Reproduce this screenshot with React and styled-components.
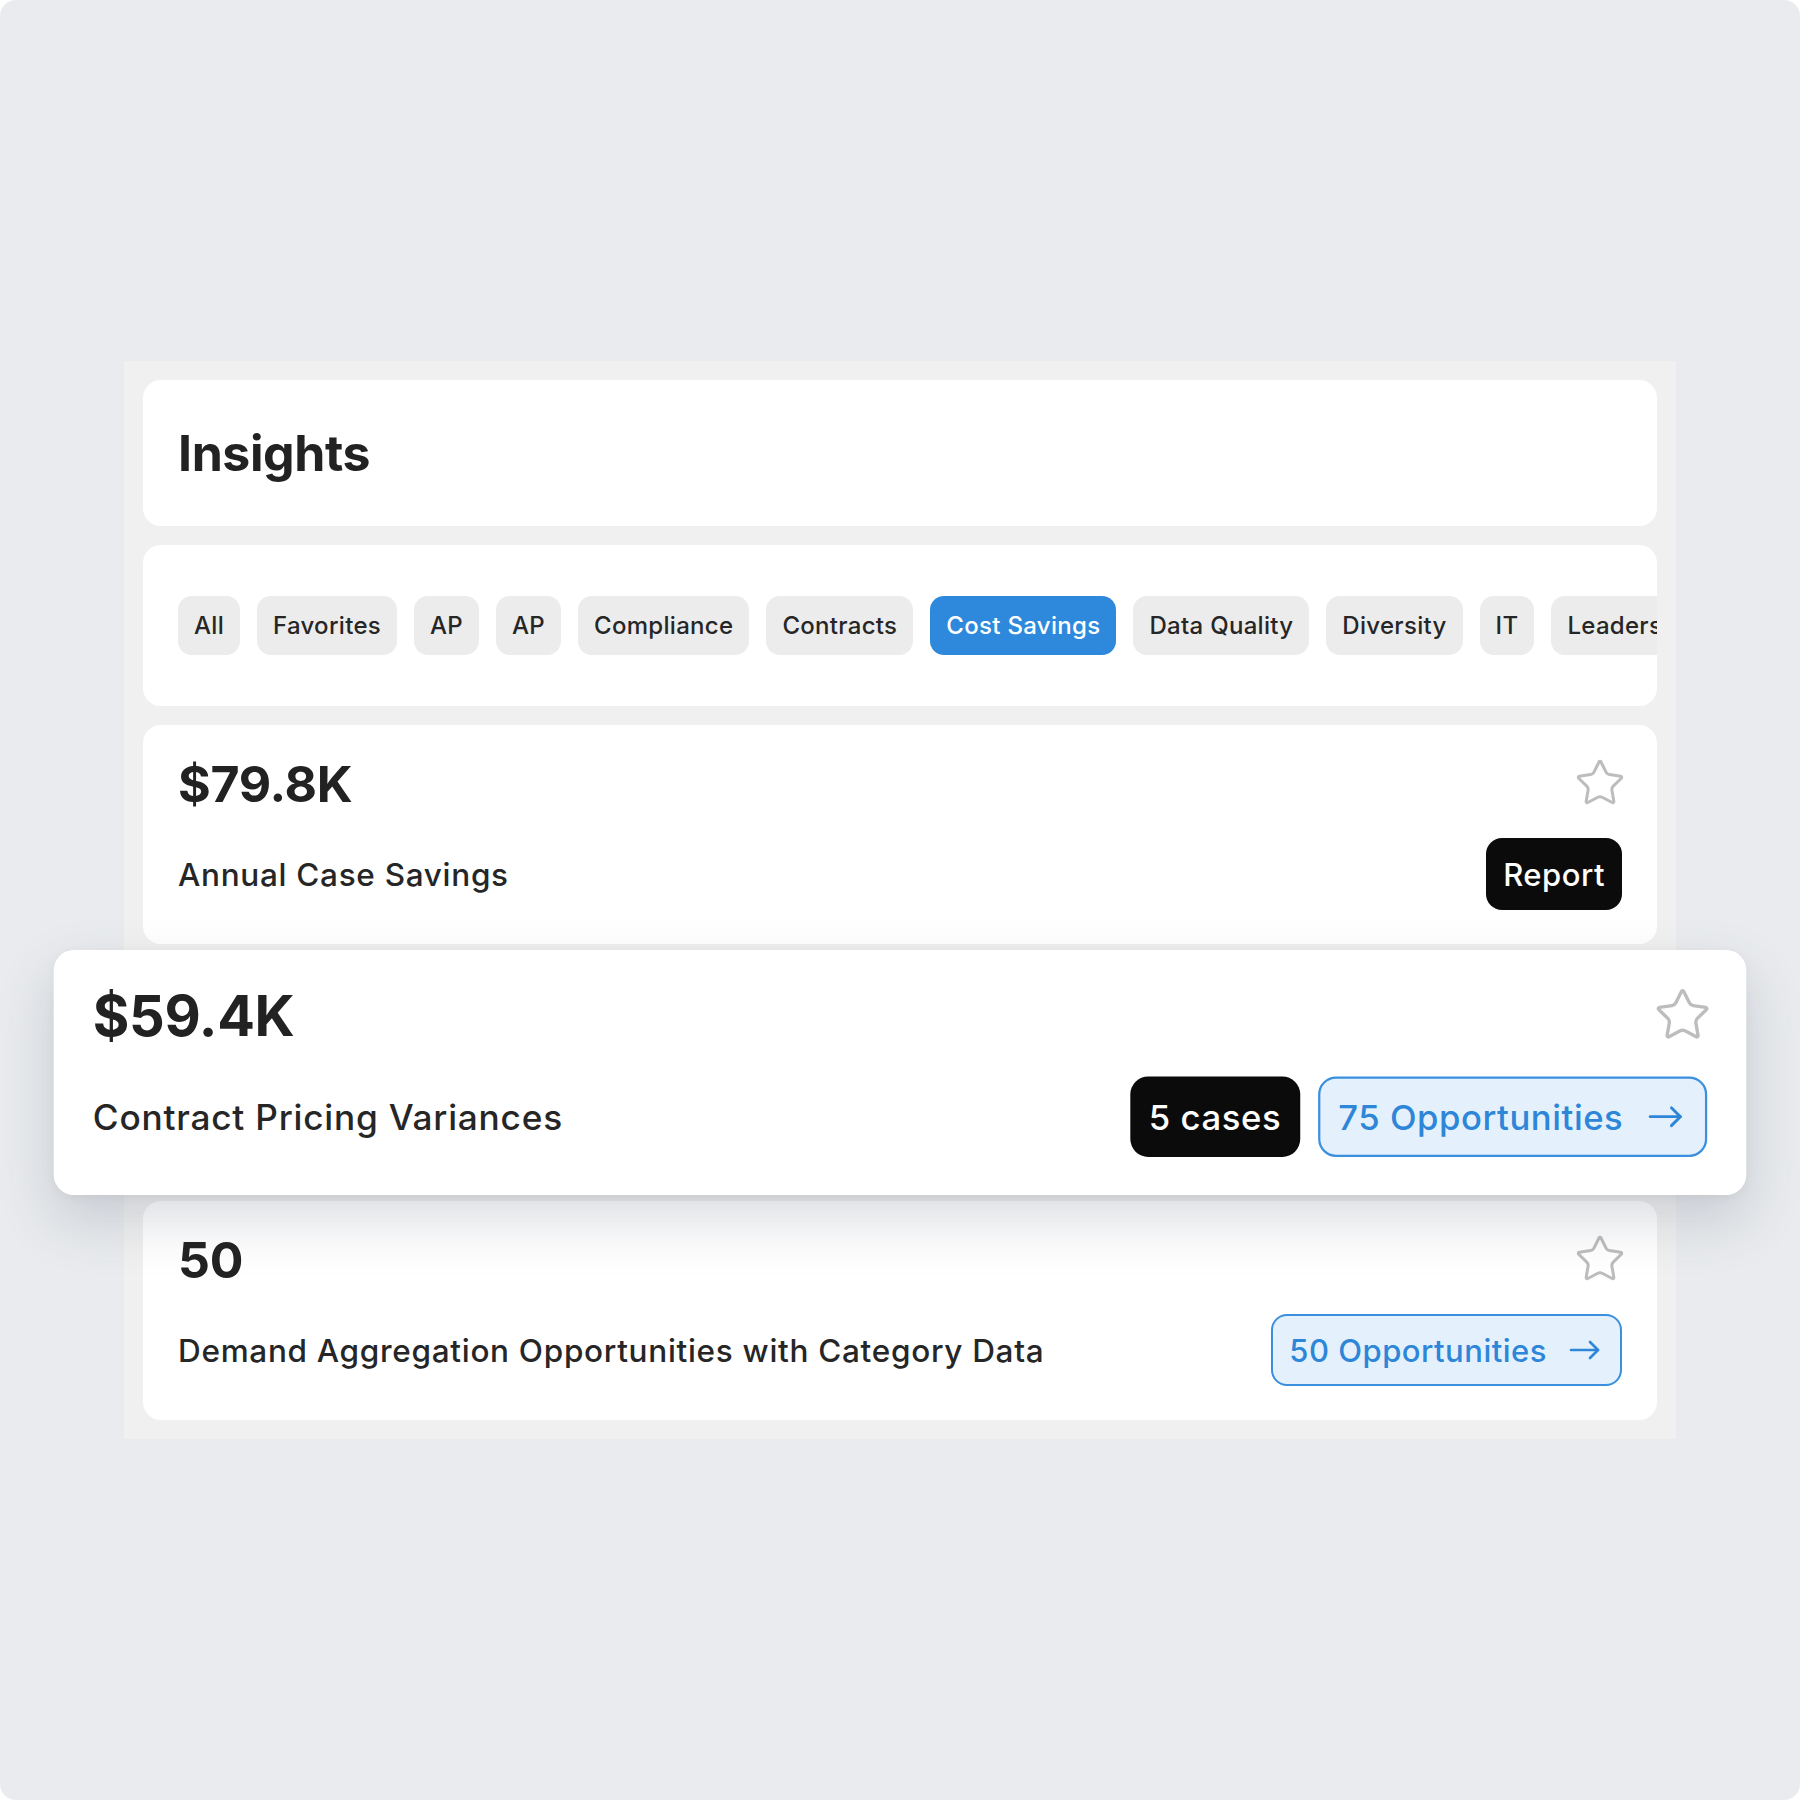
import styled, { createGlobalStyle } from 'styled-components'
import { Star } from 'lucide-react'

const GlobalStyle = createGlobalStyle`
  html, body {
    margin: 0;
    padding: 0;
    background: #ffffff;
  }
  body {
    font-family: Inter, "Noto Sans", "Liberation Sans", sans-serif;
    color: #232323;
    -webkit-font-smoothing: antialiased;
  }
`

const Frame = styled.div`
  width: 1800px;
  height: 1800px;
  border-radius: 16px;
  background: #e9ebee;
  display: flex;
  align-items: center;
  justify-content: center;
  overflow: hidden;
`

const Panel = styled.div`
  width: 1552px;
  box-sizing: border-box;
  padding: 19px;
  background: #f0f0f0;
  display: flex;
  flex-direction: column;
  gap: 19px;
`

const Card = styled.div`
  background: #ffffff;
  border-radius: 18px;
  box-sizing: border-box;
`

const HeaderCard = styled(Card)`
  height: 146px;
  padding: 0 35px;
  display: flex;
  align-items: center;
`

const Title = styled.h1`
  margin: 0;
  font-size: 50px;
  font-weight: 700;
  letter-spacing: -0.4px;
  color: #222;
`

const ChipCard = styled(Card)`
  height: 161px;
  padding: 0 0 0 35px;
  display: flex;
  align-items: center;
  overflow: hidden;
`

const ChipRow = styled.div`
  display: flex;
  gap: 17px;
  flex-wrap: nowrap;
`

const Chip = styled.button`
  flex: none;
  height: 59px;
  padding: 0 16px;
  border: none;
  border-radius: 14px;
  font-family: inherit;
  font-size: 24px;
  font-weight: 500;
  letter-spacing: 0.3px;
  background: ${(p) => (p.$active ? '#2e89dd' : '#ececec')};
  color: ${(p) => (p.$active ? '#ffffff' : '#262626')};
`

const InsightCard = styled(Card)`
  height: 219px;
  padding: 29px 35px 34px;
  display: flex;
  flex-direction: column;
  gap: 24px;
  position: relative;
  ${(p) =>
    p.$raised &&
    `
    z-index: 2;
    transform: scale(1.118);
    box-shadow: 0 22px 50px rgba(70, 80, 100, 0.2), 0 2px 8px rgba(0, 0, 0, 0.04);
  `}
`

const TopRow = styled.div`
  display: flex;
  justify-content: space-between;
  align-items: flex-start;
  height: 60px;
`

const Value = styled.div`
  font-size: 50px;
  line-height: 60px;
  font-weight: 700;
  letter-spacing: -0.3px;
  color: #222;
`

const StarBox = styled.div`
  margin: 3px -4px 0 0;
  color: #bdbdbd;
  display: flex;
`

const BottomRow = styled.div`
  display: flex;
  justify-content: space-between;
  align-items: center;
  height: 72px;
`

const Label = styled.div`
  font-size: 31.5px;
  font-weight: 500;
  letter-spacing: 0.7px;
  color: #262626;
`

const Actions = styled.div`
  display: flex;
  gap: 16px;
`

const DarkButton = styled.button`
  height: 72px;
  padding: 0 17px;
  border: none;
  border-radius: 16px;
  background: #0b0b0b;
  color: #fff;
  font-family: inherit;
  font-size: 31px;
  font-weight: 500;
  letter-spacing: 0.5px;
`

const OutlineButton = styled.button`
  height: 72px;
  box-sizing: border-box;
  padding: 0 20px 0 16px;
  border: 2px solid #3a8fdf;
  border-radius: 16px;
  background: #e4f1fc;
  color: #2d86d8;
  font-family: inherit;
  font-size: 31px;
  font-weight: 500;
  letter-spacing: 0.5px;
  display: flex;
  align-items: center;
  gap: 22px;
`

const Arrow = () => (
  <svg width="31" height="20" viewBox="0 0 31 20" fill="none" stroke="currentColor" strokeWidth="2.6" strokeLinecap="round" strokeLinejoin="round">
    <path d="M2 10h27" />
    <path d="M21 2l8 8-8 8" />
  </svg>
)

const chips = ['All', 'Favorites', 'AP', 'AP', 'Compliance', 'Contracts', 'Cost Savings', 'Data Quality', 'Diversity', 'IT', 'Leadership', 'Savings']

const insights = [
  { value: '$79.8K', label: 'Annual Case Savings', report: true },
  { value: '$59.4K', label: 'Contract Pricing Variances', cases: 5, opportunities: 75, raised: true },
  { value: '50', label: 'Demand Aggregation Opportunities with Category Data', opportunities: 50 },
]

export default function App() {
  return (
    <>
      <GlobalStyle />
      <Frame>
        <Panel>
          <HeaderCard>
            <Title>Insights</Title>
          </HeaderCard>
          <ChipCard>
            <ChipRow>
              {chips.map((c, i) => (
                <Chip key={i} $active={c === 'Cost Savings'}>{c}</Chip>
              ))}
            </ChipRow>
          </ChipCard>
          {insights.map((item) => (
            <InsightCard key={item.label} $raised={item.raised}>
              <TopRow>
                <Value>{item.value}</Value>
                <StarBox>
                  <Star size={52} strokeWidth={1.4} />
                </StarBox>
              </TopRow>
              <BottomRow>
                <Label>{item.label}</Label>
                <Actions>
                  {item.report && <DarkButton>Report</DarkButton>}
                  {item.cases && <DarkButton>{item.cases} cases</DarkButton>}
                  {item.opportunities && (
                    <OutlineButton>
                      {item.opportunities} Opportunities
                      <Arrow />
                    </OutlineButton>
                  )}
                </Actions>
              </BottomRow>
            </InsightCard>
          ))}
        </Panel>
      </Frame>
    </>
  )
}
